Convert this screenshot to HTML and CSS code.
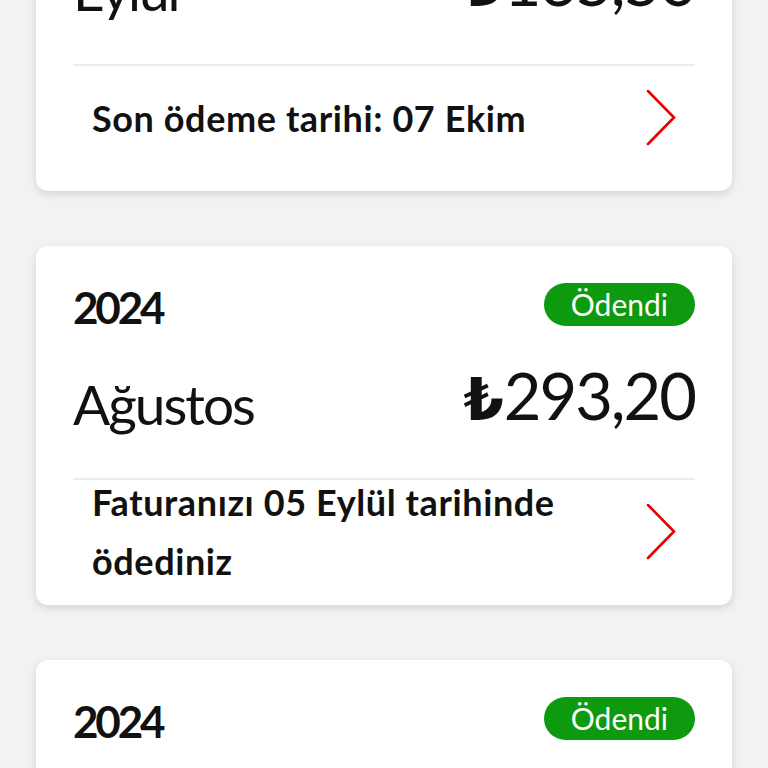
FILE: index.html
```html
<!DOCTYPE html>
<html lang="tr">
<head>
<meta charset="utf-8">
<title>Faturalar</title>
<link rel="stylesheet" href="styles.css">
</head>
<body>
<main class="list">
  <section class="card">
    <div class="head">
      <span class="year">2024</span>
    </div>
    <div class="sum">
      <span class="month">Eylül</span>
      <span class="amount"><span class="tl">₺</span>165,50</span>
    </div>
    <div class="divider"></div>
    <a class="action">
      <span class="action-text">Son ödeme tarihi: 07 Ekim</span>
      <svg class="chev" viewBox="0 0 30 56" width="30" height="56"><path d="M2 1 L28 27.5 L2 54" fill="none" stroke="#e60000" stroke-width="2.6" stroke-linecap="round" stroke-linejoin="miter"/></svg>
    </a>
  </section>

  <section class="card">
    <div class="head">
      <span class="year">2024</span>
      <span class="pill">Ödendi</span>
    </div>
    <div class="sum">
      <span class="month">Ağustos</span>
      <span class="amount"><span class="tl">₺</span>293,20</span>
    </div>
    <div class="divider"></div>
    <a class="action">
      <span class="action-text">Faturanızı 05 Eylül tarihinde ödediniz</span>
      <svg class="chev" viewBox="0 0 30 56" width="30" height="56"><path d="M2 1 L28 27.5 L2 54" fill="none" stroke="#e60000" stroke-width="2.6" stroke-linecap="round" stroke-linejoin="miter"/></svg>
    </a>
  </section>

  <section class="card">
    <div class="head">
      <span class="year">2024</span>
      <span class="pill">Ödendi</span>
    </div>
    <div class="sum">
      <span class="month">Temmuz</span>
      <span class="amount"><span class="tl">₺</span>287,40</span>
    </div>
    <div class="divider"></div>
    <a class="action">
      <span class="action-text">Faturanızı 04 Ağustos tarihinde ödediniz</span>
      <svg class="chev" viewBox="0 0 30 56" width="30" height="56"><path d="M2 1 L28 27.5 L2 54" fill="none" stroke="#e60000" stroke-width="2.6" stroke-linecap="round" stroke-linejoin="miter"/></svg>
    </a>
  </section>
</main>
</body>
</html>
```

FILE: styles.css
```css
html, body {
  margin: 0;
  padding: 0;
  background: #f2f2f2;
}

body {
  font-family: Lato, "Open Sans", "Noto Sans", sans-serif;
  color: #111;
  overflow: hidden;
  height: 768px;
}

.list {
  display: flex;
  flex-direction: column;
  gap: 55px;
  padding: 0 36px;
  margin-top: -168px;
}

.card {
  background: #fff;
  border-radius: 12px;
  box-shadow: 0 3px 8px rgba(0, 0, 0, 0.13);
  padding: 37px 37px 21px;
  display: flex;
  flex-direction: column;
}

.head {
  display: flex;
  justify-content: space-between;
  align-items: center;
  height: 43px;
}

.year {
  font-size: 44px;
  font-weight: 700;
  letter-spacing: -3.2px;
  line-height: 1;
  padding-top: 4px;
}

.pill {
  background: #0e9a0e;
  color: #fff;
  font-size: 30px;
  line-height: 43px;
  height: 43px;
  padding: 0 27px;
  border-radius: 22px;
}

.sum {
  display: flex;
  justify-content: space-between;
  align-items: flex-end;
  margin-top: 38px;
  height: 68px;
}

.month {
  font-size: 55px;
  line-height: 1;
  letter-spacing: -2px;
}

.amount {
  font-size: 65px;
  line-height: 1;
  letter-spacing: -2px;
  margin-bottom: 3px;
}

.tl {
  font-family: "DejaVu Sans", Lato, sans-serif;
  font-weight: 700;
  font-size: 58px;
  letter-spacing: 0;
}

.divider {
  height: 2px;
  background: #ebebeb;
  margin-top: 46px;
}

.action {
  display: flex;
  align-items: center;
  justify-content: space-between;
  height: 104px;
  padding-left: 19px;
  padding-right: 19px;
}

.action-text {
  font-size: 36px;
  font-weight: 700;
  letter-spacing: 0.6px;
  line-height: 59px;
  max-width: 520px;
}

.chev {
  flex: none;
  display: block;
}
```
